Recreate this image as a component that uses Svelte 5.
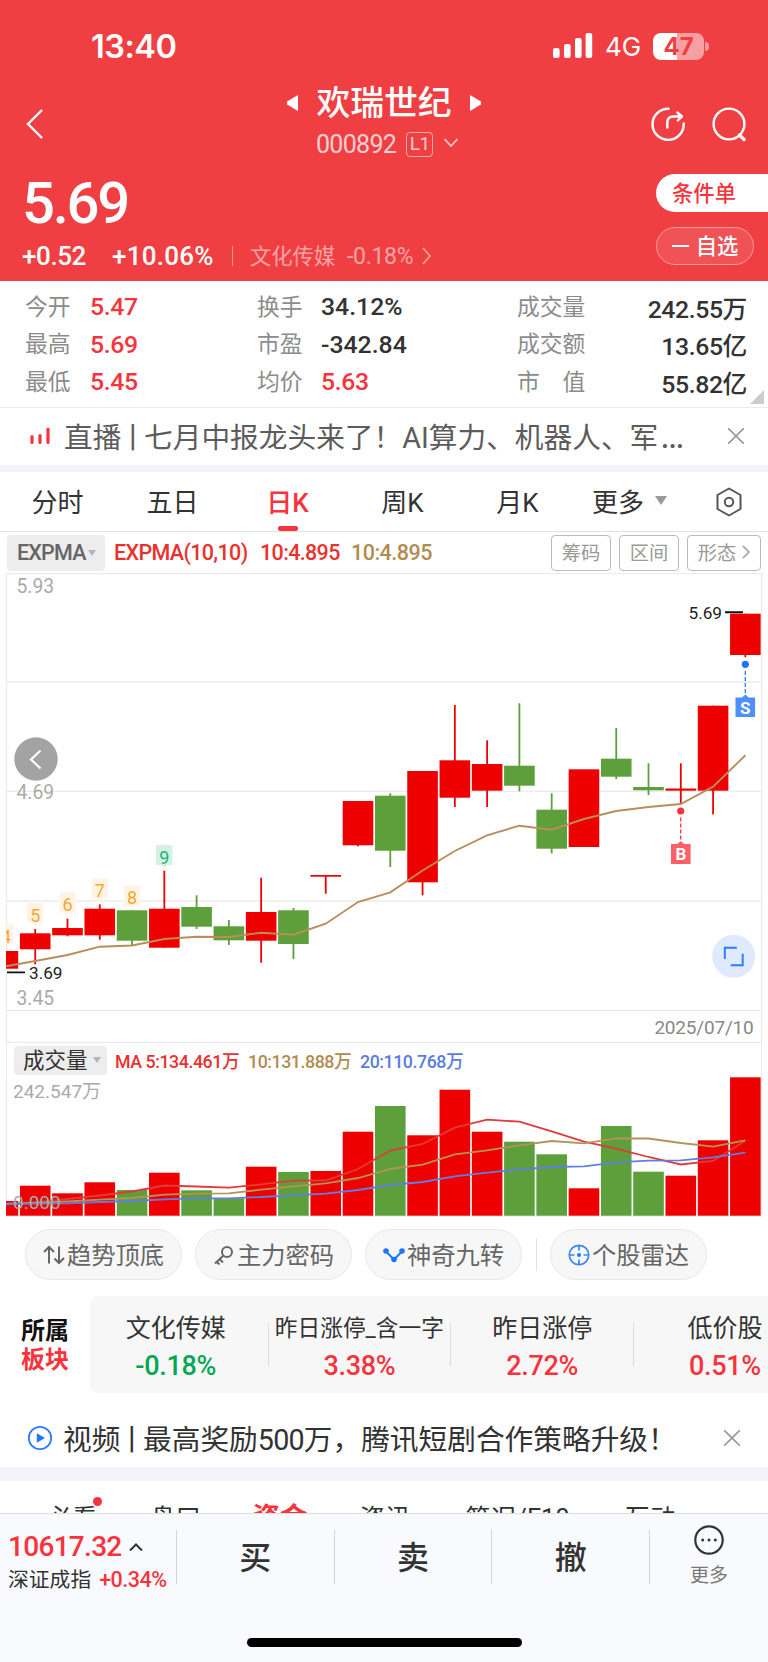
<script lang="ts">
	type Candle = {
		top: number
		bottom: number
		high: number
		low: number
		up: boolean
		vol: number
	}

	const STEP = 32.28
	const FIRST = 35.2
	const BODY = 30.6
	const VOL_BASE = 1215.7

	const c = (top: number, bottom: number, high: number, low: number, up: boolean, vol: number): Candle => ({
		top,
		bottom,
		high,
		low,
		up,
		vol,
	})

	const candles: Candle[] = [
		c(951, 968.7, 951, 968.7, true, 1201),
		c(933.3, 949.3, 929, 964.3, true, 1185.7),
		c(928, 935.3, 918.7, 936.3, true, 1193.3),
		c(908.7, 935.3, 904.3, 939.7, true, 1182.3),
		c(910.3, 940.7, 910.3, 945, false, 1190),
		c(908.7, 947.7, 870.7, 947.7, true, 1172.7),
		c(907, 926.7, 895.3, 929, false, 1190.3),
		c(926.3, 940.3, 920, 945, false, 1198.3),
		c(912, 940.7, 877.7, 962.7, true, 1166.7),
		c(910.3, 944, 908, 959, false, 1172),
		c(875, 876.7, 875, 893.7, true, 1171),
		c(801, 845.3, 801, 846.3, true, 1131.7),
		c(795.7, 850.7, 793.3, 867, false, 1106),
		c(771, 882.3, 771, 895.3, true, 1135.3),
		c(760.3, 797.7, 705, 807, true, 1089.7),
		c(764, 790.7, 740.3, 807, true, 1131.7),
		c(765.7, 785.7, 703.3, 791.3, false, 1141.7),
		c(809.7, 848.7, 793.3, 853.3, false, 1154.3),
		c(769.3, 847, 769.3, 847, true, 1188.3),
		c(758.7, 776.7, 728, 779, false, 1126),
		c(787, 790.3, 763.3, 795, false, 1171.7),
		c(788.5, 790.7, 763.3, 803.3, true, 1175.7),
		c(705.7, 790.7, 705.7, 814.3, true, 1140.3),
		c(613.7, 655, 613.7, 657.3, true, 1077.3),
	]

	const expma = [
		966.3, 961, 955, 946.7, 945.5, 939, 936.7, 937, 932.7, 934.7, 923.7, 902, 892.3, 870.5, 851, 835.3, 825.7,
		829.7, 819, 811, 807, 804, 786.7, 755.3,
	]
	const ma5 = [
		1203.5, 1202.5, 1199, 1195.5, 1191.5, 1185.5, 1186.5, 1187.7, 1184.3, 1180.7, 1180.5, 1169, 1150.5, 1144,
		1127.7, 1119.7, 1121.7, 1131.3, 1141.7, 1148.7, 1157, 1164.5, 1161, 1140.7,
	]
	const ma10 = [
		1204, 1202.7, 1201.5, 1199.7, 1198, 1194.7, 1193.7, 1193.3, 1189.7, 1186.3, 1183.3, 1178, 1169, 1164.7,
		1154.3, 1150.3, 1145.3, 1141, 1143.3, 1138.3, 1138.5, 1143, 1146.7, 1140.3,
	]
	const ma20 = [
		1204.3, 1203.7, 1203.3, 1202, 1201, 1199.3, 1198.3, 1198.3, 1197, 1195.3, 1193.7, 1190, 1185, 1182, 1176.3,
		1172.7, 1169.3, 1167, 1166.3, 1162.3, 1160.7, 1160.3, 1157.3, 1152.7,
	]

	const cx = (i: number) => FIRST + STEP * (i - 1)
	const left = (i: number) => Math.max(6, cx(i) - BODY / 2)
	const barWidth = (i: number) => cx(i) + BODY / 2 - left(i)
	const points = (ys: number[]) => ys.map((y, i) => `${Math.max(6, cx(i)).toFixed(1)},${y}`).join(' ')

	const counts = [
		{ n: '5', x: 35.2, y: 903 },
		{ n: '6', x: 67.5, y: 892.5 },
		{ n: '7', x: 99.8, y: 878.5 },
		{ n: '8', x: 132, y: 885.5 },
	]

	const stats = [
		['今开', '5.47', true, '换手', '34.12%', false, '成交量', '242.55万'],
		['最高', '5.69', true, '市盈', '-342.84', false, '成交额', '13.65亿'],
		['最低', '5.45', true, '均价', '5.63', true, '市　值', '55.82亿'],
	]

	const periods = ['分时', '五日', '日K', '周K', '月K']
	let period = $state('日K')

	const sectors = [
		{ name: '文化传媒', change: '-0.18%' },
		{ name: '昨日涨停_含一字', change: '3.38%', small: true },
		{ name: '昨日涨停', change: '2.72%' },
		{ name: '低价股', change: '0.51%' },
	]

	const sections = ['必看', '盘口', '资金', '资讯', '简况/F10', '互动']
	let section = $state('资金')
</script>

<div class="app">
	<header>
		<div class="status">
			<span class="time">13:40</span>
			<svg class="signal" width="40" height="26" viewBox="0 0 40 26" fill="#fff">
				<rect x="0" y="15" width="6.6" height="10" rx="2" />
				<rect x="11" y="11" width="6.6" height="14" rx="2" />
				<rect x="22" y="5" width="6.6" height="20" rx="2" />
				<rect x="32.6" y="0" width="6.6" height="25" rx="2" />
			</svg>
			<span class="net">4G</span>
			<span class="battery">47</span>
			<i class="cap"></i>
		</div>

		<div class="nav">
			<svg class="back" width="20" height="32" viewBox="0 0 20 32" fill="none" stroke="#fff" stroke-width="2.4">
				<path d="M17 2 3 16l14 14" />
			</svg>
			<div class="title">
				<div class="name">
					<svg width="12" height="16" viewBox="0 0 12 16" fill="#fff"><path d="M11 0v16L0 9.5q-1-1.5 0-3z" /></svg>
					<h1>欢瑞世纪</h1>
					<svg width="12" height="16" viewBox="0 0 12 16" fill="#fff"><path d="M1 0v16l11-6.5q1-1.5 0-3z" /></svg>
				</div>
				<div class="code">
					<span>000892</span>
					<b>L1</b>
					<svg width="16" height="10" viewBox="0 0 16 10" fill="none" stroke="#fbd0d0" stroke-width="1.7">
						<path d="m1.5 1 6.5 7 6.5-7" />
					</svg>
				</div>
			</div>
			<svg class="share" width="36" height="36" viewBox="0 0 36 36" fill="none" stroke="#fff" stroke-width="2.4" stroke-linecap="round" stroke-linejoin="round">
				<path d="M18.500 2.700A15.600 15.600 0 1 0 33.700 17.500" />
				<path d="M17.300 21.500V17q0-6.500 6-6.500h8M27.300 6.500l4.700 4-4.200 4" />
			</svg>
			<svg class="search" width="36" height="36" viewBox="0 0 36 36" fill="none" stroke="#fff" stroke-width="2.4" stroke-linecap="round">
				<circle cx="18" cy="18" r="15.4" />
				<path d="m28.500 29 4.500 4.500" stroke-width="3.2" />
			</svg>
		</div>

		<div class="quote">
			<div>
				<div class="price">5.69</div>
				<div class="change">
					<span class="diff">+0.52</span>
					<span class="pct">+10.06%</span>
					<i></i>
					<span class="board">文化传媒</span>
					<span class="board-pct">-0.18%</span>
					<svg width="10" height="18" viewBox="0 0 10 18" fill="none" stroke="#f9a5a6" stroke-width="1.6">
						<path d="m1 1 7 8-7 8" />
					</svg>
				</div>
			</div>
			<div class="pills">
				<button class="order">条件单</button>
				<button class="fav"><i></i><span>自选</span></button>
			</div>
		</div>
	</header>

	<section class="stats">
		{#each stats as [a, av, aUp, b, bv, bUp, d, dv]}
			<span class="label">{a}</span>
			<span class="value" class:up={aUp}>{av}</span>
			<span class="label">{b}</span>
			<span class="value" class:up={bUp}>{bv}</span>
			<span class="label">{d}</span>
			<span class="value end">{dv}</span>
		{/each}
		<i class="corner"></i>
	</section>

	<div class="notice live">
		<svg width="20" height="18" viewBox="0 0 20 18" stroke="#f9333c" stroke-width="3.2" stroke-linecap="round">
			<path d="M2 9.500v6M10 8.500v7M18 2v13.500" />
		</svg>
		<p>直播<s>丨</s>七月中报龙头来了！AI算力、机器人、军<span class="dots">…</span></p>
		<svg class="close" width="16" height="16" viewBox="0 0 16 16" stroke="#999" stroke-width="1.6"><path d="m0 0 16 16M16 0 0 16" /></svg>
	</div>

	<nav class="periods">
		{#each periods as p}
			<button class:active={period === p} onclick={() => (period = p)}>{p}</button>
		{/each}
		<button class="more">更多<i class="caret"></i></button>
		<svg class="gear" width="28" height="30" viewBox="0 0 28 30" fill="none" stroke="#555" stroke-width="2" stroke-linejoin="round">
			<path d="M14 1.500 25.500 8v14L14 28.500 2.500 22V8z" />
			<circle cx="14" cy="15" r="4.2" />
		</svg>
	</nav>

	<div class="indicator">
		<span class="pick">EXPMA<i class="caret"></i></span>
		<span class="red">EXPMA(10,10)</span>
		<span class="red r2">10:4.895</span>
		<span class="gold">10:4.895</span>
		<div class="tools">
			<button>筹码</button>
			<button>区间</button>
			<button class="shape">形态<svg width="8" height="14" viewBox="0 0 8 14" fill="none" stroke="#999" stroke-width="1.5"><path d="m1 1 6 6-6 6" /></svg></button>
		</div>
	</div>

	<svg class="chart" width="768" height="470" viewBox="0 573 768 470">
		<g class="grid">
			{#each [573.5, 682, 791.3, 901, 1010.3, 1042.3] as y}
				<line x1="6" x2="762" y1={y} y2={y} />
			{/each}
			<line x1="6.5" x2="6.5" y1="573" y2="1043" />
			<line x1="761.7" x2="761.7" y1="573" y2="1043" />
		</g>
		<g class="axis">
			<text x="16.5" y="593">5.93</text>
			<text x="16.5" y="799">4.69</text>
			<text x="16.5" y="1005">3.45</text>
		</g>

		<path d="M6 924.500h7.500v20H6z" fill="#fff3e6" />
		<svg x="6" y="920" width="10" height="28"><text class="count" x="0" y="23">4</text></svg>
		{#each counts as k}
			<path d="M{k.x - 8} {k.y}h16v20h-5l-3 2.500-3-2.500h-5z" fill="#fff3e6" />
			<text class="count" x={k.x} y={k.y + 18.6}>{k.n}</text>
		{/each}
		<path d="M156 845h16.500v20h-5l-3.200 2.700-3.200-2.700H156z" fill="#d5f1e4" />
		<text class="count nine" x="164.300" y="864">9</text>

		{#each candles as k, i}
			<g fill={k.up ? '#ee0000' : '#5d9f3a'}>
				<rect x={left(i)} y={k.top} width={barWidth(i)} height={k.bottom - k.top} />
				{#if k.low - k.high > k.bottom - k.top}
					<rect x={cx(i) - 0.9} y={k.high} width="1.8" height={k.low - k.high} />
				{/if}
			</g>
		{/each}
		<polyline points={points(expma)} fill="none" stroke="#b98d5c" stroke-width="1.9" />

		<path d="M7 972.400h18M725 612.200h18" stroke="#111" stroke-width="1.9" />
		<text class="mark" x="29" y="979">3.69</text>
		<text class="mark" x="688.500" y="619">5.69</text>

		<g class="trade" stroke="#2b7bff" fill="#4d8fff">
			<circle cx="745.3" cy="664.3" r="3.6" fill="#1e76ff" stroke="none" />
			<path d="M745.300 671v22" stroke-dasharray="4 2" />
			<path d="M735.500 697.500h6.500l3.300-3 3.300 3h6.500V717h-19.600z" stroke="none" />
			<text x="745.3" y="713.5">S</text>
		</g>
		<g class="trade" stroke="#f9333c" fill="#fb5f69">
			<circle cx="680.7" cy="811" r="3.6" fill="#f9333c" stroke="none" />
			<path d="M680.700 817.500v22" stroke-dasharray="4 2" />
			<path d="M671 844h6.500l3.300-3 3.300 3h6.500v20H671z" stroke="none" />
			<text x="680.9" y="860.2">B</text>
		</g>

		<circle cx="36" cy="759" r="21.7" fill="#a3a3a3" />
		<path d="m40.500 750.500-9.500 9 9.500 9" fill="none" stroke="#fff" stroke-width="2.2" />
		<circle cx="733.7" cy="956.3" r="21.5" fill="#dfe9ff" />
		<path d="M724.800 959v-11.300h12M730.700 965.300h12V953.700" fill="none" stroke="#2b7bff" stroke-width="1.9" />

		<text class="date" x="753.5" y="1034">2025/07/10</text>
	</svg>

	<div class="vol-head">
		<span class="pick"><span>成交量</span><i class="caret"></i></span>
		<span class="red">MA 5:134.461万</span>
		<span class="gold">10:131.888万</span>
		<span class="blue">20:110.768万</span>
	</div>
	<svg class="chart" width="768" height="140" viewBox="0 1077 768 140">
		<g class="grid">
			<line x1="6.5" x2="6.5" y1="1077" y2="1216" />
			<line x1="761.7" x2="761.7" y1="1077" y2="1216" />
			<line x1="6" x2="762" y1="1216" y2="1216" />
		</g>
		{#each candles as k, i}
			<rect x={left(i)} y={k.vol} width={barWidth(i)} height={VOL_BASE - k.vol} fill={k.up ? '#ee0000' : '#5d9f3a'} />
		{/each}
		<g fill="none" stroke-width="1.8">
			<polyline points={points(ma5)} stroke="#e23a38" />
			<polyline points={points(ma10)} stroke="#b3935a" />
			<polyline points={points(ma20)} stroke="#5f7fe0" />
		</g>
		<g class="axis vol">
			<text x="13" y="1098">242.547万</text>
			<text x="13" y="1209">0.000</text>
		</g>
	</svg>

	<div class="chips">
		<button>
			<svg width="22" height="20" viewBox="0 0 22 20" fill="none" stroke="#666" stroke-width="2"><path d="M6 18.500V2M1 7l5-5 5 5M16 1.500V18M11.500 13.500 16 18l5-5" /></svg><span>趋势顶底</span>
		</button>
		<button>
			<svg width="22" height="20" viewBox="0 0 22 20" fill="none" stroke="#666" stroke-width="2"><circle cx="14" cy="7" r="5" /><path d="M10.500 10.500 2 18.500M6.500 14l3.500 3.500M3.500 16.500l3 3" /></svg><span>主力密码</span>
		</button>
		<button>
			<svg width="22" height="20" viewBox="0 0 22 20" fill="#1e76ff"><path d="M3 6.500 11 14.500 19 6.500" fill="none" stroke="#1e76ff" stroke-width="2" /><circle cx="3" cy="6" r="2.8" /><circle cx="11" cy="14.5" r="2.8" /><circle cx="19" cy="6" r="2.8" /></svg><span>神奇九转</span>
		</button>
		<i></i>
		<button>
			<svg width="22" height="22" viewBox="0 0 22 22" fill="none" stroke="#3a86ff" stroke-width="1.7"><circle cx="11" cy="11" r="9.7" /><path d="M11 1v5.500M11 15.500V21M1 11h5.500M15.500 11H21" /><circle cx="11" cy="11" r="2" fill="#1e76ff" stroke="none" /></svg><span>个股雷达</span>
		</button>
	</div>

	<div class="belong">
		<div class="belong-title">所属<em>板块</em></div>
		<div class="sectors">
			{#each sectors as s}
				<div class="sector">
					<span class:small={s.small}>{s.name}</span>
					<b class:down={s.change.startsWith('-')}>{s.change}</b>
				</div>
			{/each}
		</div>
	</div>

	<div class="notice video">
		<svg width="26" height="26" viewBox="0 0 26 26"><circle cx="13" cy="13" r="11.2" fill="none" stroke="#2b7bff" stroke-width="1.8" /><path d="M9.800 8.200v9.600l8.200-4.800z" fill="#1e76ff" /></svg>
		<p>视频<s>丨</s>最高奖励<span class="num">500</span>万，腾讯短剧合作策略升级！</p>
		<svg class="close" width="16" height="16" viewBox="0 0 16 16" stroke="#999" stroke-width="1.6"><path d="m0 0 16 16M16 0 0 16" /></svg>
	</div>

	<nav class="sections">
		{#each sections as s, i}
			<button class:active={section === s} class:dot={i === 0} onclick={() => (section = s)}>{s}</button>
		{/each}
	</nav>

	<footer>
		<div class="actions">
			<div class="index">
				<div class="idx-value">10617.32<svg width="14" height="8" viewBox="0 0 14 8" fill="none" stroke="#333" stroke-width="2"><path d="m1 7.500 6-6 6 6" /></svg></div>
				<div class="idx-name">深证成指<span>+0.34%</span></div>
			</div>
			<button>买</button>
			<button>卖</button>
			<button>撤</button>
			<div class="more-btn">
				<svg width="32" height="32" viewBox="0 0 32 32" fill="#333"><circle cx="16" cy="16" r="13.7" fill="none" stroke="#333" stroke-width="2.2" /><circle cx="9.7" cy="16" r="1.5" /><circle cx="16" cy="16" r="1.5" /><circle cx="22.3" cy="16" r="1.5" /></svg>
				更多
			</div>
		</div>
		<div class="home"></div>
	</footer>
</div>

<style>
	:global(body) {
		background: #fff;
	}

	.app {
		--red: #f9333c;
		width: 768px;
		height: 1662px;
		overflow: hidden;
		background: #fff;
		color: #333;
		font-family: Roboto, 'Noto Sans CJK SC', sans-serif;
		white-space: nowrap;
	}
	button {
		padding: 0;
		border: none;
		background: none;
		color: inherit;
		font: inherit;
		cursor: pointer;
	}
	svg {
		display: block;
		flex: none;
	}
	.caret {
		border: 4px solid transparent;
		border-top: 6px solid #b5b5b5;
		border-bottom: 0;
	}
	.red { color: #e8322f; }
	.gold { color: #b08c4f; }
	.blue { color: #5a7ce0; }

	/* header */
	header {
		height: 281px;
		background: #f03f42;
		color: #fff;
	}
	.status {
		display: flex;
		align-items: center;
		height: 76px;
		padding: 8px 59px 0 91px;
	}
	.time {
		font: 600 32.5px Inter, sans-serif;
		letter-spacing: -0.5px;
	}
	.signal {
		margin-left: auto;
	}
	.net {
		margin-left: 12px;
		width: 48px;
		font: 400 26px Inter, sans-serif;
	}
	.battery {
		width: 51px;
		height: 27px;
		border-radius: 8px;
		background: linear-gradient(90deg, #fff 47%, #f8a0a1 47%);
		color: #f03f42;
		font: 700 24px/27px Inter, sans-serif;
		text-align: center;
	}
	.cap {
		width: 4px;
		height: 9px;
		margin-left: 1px;
		border-radius: 0 5px 5px 0;
		background: #f8a0a1;
	}
	.nav {
		display: flex;
		align-items: center;
		height: 80px;
		padding: 0 21px 0 25px;
	}
	.title {
		align-self: flex-start;
		margin: 2px 0 0 242px;
		width: 194px;
	}
	.name {
		display: flex;
		align-items: center;
		justify-content: space-between;
	}
	.name svg {
		margin-bottom: 2px;
	}
	h1 {
		margin: 0;
		font-size: 33.8px;
		font-weight: 500;
		line-height: 35px;
	}
	.code {
		display: flex;
		align-items: center;
		height: 26px;
		margin: 10px 0 0 29px;
		color: #fbd0d0;
		font-size: 25px;
		letter-spacing: -0.7px;
	}
	.code b {
		box-sizing: border-box;
		width: 27px;
		height: 25px;
		margin: 0 11px 0 10px;
		border: 1.5px solid #f8a9aa;
		border-radius: 4px;
		font-size: 19px;
		font-weight: 400;
		line-height: 22px;
		text-align: center;
	}
	.code svg {
		margin-left: -1px;
		margin-bottom: 2px;
	}
	.share {
		margin-left: auto;
	}
	.search {
		margin-left: 25px;
	}
	.quote {
		display: flex;
		justify-content: space-between;
	}
	.price {
		margin: 9px 0 0 22px;
		font-size: 58px;
		font-weight: 500;
		line-height: 60px;
		letter-spacing: -2.3px;
	}
	.change {
		display: flex;
		align-items: center;
		height: 30px;
		margin: 8px 0 0 22px;
	}
	.diff, .pct {
		font-size: 26px;
		font-weight: 500;
		letter-spacing: -0.4px;
	}
	.diff { width: 90px; }
	.pct {
		width: 120px;
		letter-spacing: 0.25px;
	}
	.change i {
		width: 1px;
		height: 20px;
		margin-right: 17px;
		background: #f68f90;
	}
	.board, .board-pct {
		color: #f9a5a6;
		font-size: 21.3px;
	}
	.board {
		width: 97px;
		padding-bottom: 3px;
	}
	.board-pct {
		width: 75px;
		font-size: 23px;
		letter-spacing: -0.3px;
	}
	.pills {
		display: flex;
		flex-direction: column;
		gap: 15px;
		width: 112px;
		padding-top: 10px;
		font-size: 21.3px;
		font-weight: 500;
	}
	.order {
		height: 38px;
		padding: 0 16px 3px 0;
		border-radius: 19px 0 0 19px;
		background: #fff;
		color: var(--red);
	}
	.fav {
		display: flex;
		align-items: center;
		justify-content: center;
		gap: 7px;
		box-sizing: border-box;
		width: 98px;
		height: 38px;
		border: 1px solid #f79b9c;
		border-radius: 19px;
		background: #f15255;
	}
	.fav span {
		padding-bottom: 4px;
	}
	.fav i {
		width: 17px;
		height: 2px;
		background: #fff;
	}

	/* stats */
	.stats {
		position: relative;
		display: grid;
		grid-template-columns: 65px 167px 64px 196px 80px 150px;
		grid-auto-rows: 37.6px;
		align-items: center;
		box-sizing: border-box;
		height: 127px;
		padding: 7px 21px 0 25px;
		border-bottom: 1px solid #ececec;
	}
	.label {
		padding-bottom: 3px;
		color: #8c8c8c;
		font-size: 22.8px;
	}
	.value {
		font-size: 24.8px;
		font-weight: 500;
	}
	.value.up {
		color: var(--red);
		letter-spacing: -0.4px;
	}
	.value.end {
		text-align: right;
		letter-spacing: -0.4px;
	}
	.corner {
		position: absolute;
		right: 4px;
		bottom: 3px;
		border: 7px solid #ccc;
		border-top-color: transparent;
		border-left-color: transparent;
	}

	/* notices */
	.notice {
		display: flex;
		align-items: center;
		box-sizing: border-box;
		font-size: 28.7px;
	}
	.notice p {
		flex: 1;
		margin: 0;
	}
	.notice s {
		margin: 0 -3px;
		text-decoration: none;
	}
	.dots {
		margin-left: 2px;
		font-size: 36px;
		line-height: 28px;
	}
	.num {
		letter-spacing: -0.8px;
	}
	.live {
		height: 64px;
		padding: 0 24px 2px 30px;
		border-bottom: 7px solid #f2f4f9;
		color: #5c5c5c;
	}
	.live p { padding-left: 14px; }
	.video {
		height: 88px;
		padding: 15px 28px 0 27px;
		border-bottom: 14px solid #f2f4f9;
	}
	.video p { padding-left: 10px; }

	/* period tabs */
	.periods {
		display: flex;
		align-items: center;
		box-sizing: border-box;
		height: 60px;
		border-bottom: 1px solid #e3e3e3;
		font-size: 26px;
	}
	.periods button {
		position: relative;
		width: 115px;
		height: 59px;
		padding-bottom: 2px;
	}
	.periods .active {
		color: var(--red);
		font-weight: 500;
	}
	.periods .active::after {
		content: '';
		position: absolute;
		left: 48px;
		bottom: 0;
		width: 20px;
		height: 5px;
		border-radius: 2px;
		background: var(--red);
	}
	.periods .more {
		display: flex;
		align-items: center;
		gap: 11px;
		width: 123px;
		padding-left: 17px;
	}
	.more .caret {
		border-width: 9px 6.5px 0;
		border-top-color: #999;
	}
	.gear {
		margin-left: 17px;
	}

	/* indicator row */
	.indicator {
		display: flex;
		align-items: center;
		height: 41px;
		padding: 0 7px;
		font-size: 21.5px;
		font-weight: 500;
		letter-spacing: -0.5px;
	}
	.pick {
		display: flex;
		align-items: center;
		gap: 2px;
		box-sizing: border-box;
		width: 98px;
		height: 36px;
		margin-right: 9px;
		padding-left: 10px;
		border-radius: 4px;
		background: #ededed;
		color: #666;
	}
	.indicator .red {
		width: 146px;
		letter-spacing: -0.65px;
	}
	.indicator .red.r2 { width: 91px; }
	.indicator .pick { letter-spacing: -0.8px; }
	.tools {
		display: flex;
		gap: 8px;
		margin-left: auto;
	}
	.tools button {
		box-sizing: border-box;
		width: 60px;
		height: 36px;
		padding-bottom: 2px;
		border: 1px solid #bbb;
		border-radius: 4px;
		color: #999;
		font-size: 19.3px;
		font-weight: 400;
	}
	.tools .shape {
		display: flex;
		align-items: center;
		justify-content: center;
		gap: 6px;
		width: 74px;
	}

	/* charts */
	.grid line {
		stroke: #ececec;
		stroke-width: 1.3;
	}
	.axis {
		fill: #aaa;
		font-size: 19.3px;
	}
	.axis.vol { font-size: 19px; }
	.mark {
		fill: #222;
		font-size: 17.2px;
	}
	.count {
		fill: #f9a72b;
		font-size: 18px;
		text-anchor: middle;
	}
	.nine { fill: #1bb573; }
	.trade text {
		fill: #fff;
		stroke: none;
		font-size: 17px;
		font-weight: 700;
		text-anchor: middle;
	}
	.trade path { stroke-width: 1.3; }
	.date {
		fill: #888;
		font-size: 19px;
		letter-spacing: -0.2px;
		text-anchor: end;
	}
	.vol-head {
		display: flex;
		align-items: center;
		height: 34px;
		margin: 0 6px;
		border-left: 1px solid #ececec;
		border-right: 1px solid #ececec;
		font-size: 17.8px;
		font-weight: 500;
		letter-spacing: -0.45px;
	}
	.vol-head .pick {
		gap: 5px;
		width: 93px;
		height: 29px;
		margin: 0 8px 0 7px;
		padding-left: 9px;
		color: #333;
		font-size: 21.5px;
		font-weight: 400;
		letter-spacing: 0;
	}
	.pick span { padding-bottom: 3px; }
	.vol-head .red { width: 133px; }
	.vol-head .gold { width: 112px; }

	/* shortcut chips */
	.chips {
		display: flex;
		align-items: center;
		gap: 13px;
		height: 51px;
		padding: 12px 25px 16px;
	}
	.chips button {
		display: flex;
		align-items: center;
		justify-content: center;
		gap: 2px;
		box-sizing: border-box;
		width: 157px;
		height: 51px;
		border: 1px solid #e8e8e8;
		border-radius: 26px;
		background: #f7f7f7;
		color: #666;
		font-size: 24.3px;
	}
	.chips span {
		padding-bottom: 2px;
	}
	.chips i {
		width: 1px;
		height: 33px;
		margin-left: 1px;
		background: #e2e2e2;
	}

	/* sectors */
	.belong {
		display: flex;
		height: 97px;
		overflow: hidden;
	}
	.belong-title {
		flex: none;
		width: 69px;
		padding: 21px 0 0 21px;
		color: #111;
		font-size: 24px;
		font-weight: 700;
		line-height: 28.5px;
	}
	em {
		display: block;
		color: var(--red);
		font-style: normal;
	}
	.sectors {
		display: flex;
		flex: none;
		align-items: center;
		height: 97px;
		padding-right: 60px;
		border-radius: 8px;
		background: #f7f7f7;
	}
	.sector {
		display: flex;
		flex-direction: column;
		align-items: center;
		justify-content: center;
		gap: 9px;
		box-sizing: border-box;
		width: 182.8px;
		height: 43px;
		padding-top: 5px;
		border-right: 1px solid #ddd;
	}
	.sector:first-child {
		width: 178.500px;
		padding-right: 6px;
	}
	.sector span {
		font-size: 25px;
		line-height: 29px;
	}
	.sector .small { font-size: 22.7px; }
	.sector b {
		color: var(--red);
		font-size: 27px;
		font-weight: 500;
		line-height: 29px;
		letter-spacing: -0.3px;
	}
	.sector .down { color: #00a854; }

	/* section tabs */
	.sections {
		display: grid;
		grid-template-columns: 104px 103px 106px 104px 161px 104px;
		height: 32px;
		padding-left: 20px;
		overflow: hidden;
		font-size: 25.5px;
	}
	.sections button {
		position: relative;
		height: 30px;
		margin-top: 22px;
		line-height: 30px;
	}
	.sections .active {
		color: var(--red);
		font-size: 27.5px;
		font-weight: 700;
	}
	.dot::after {
		content: '';
		position: absolute;
		left: 73px;
		top: -6px;
		width: 9px;
		height: 9px;
		border-radius: 50%;
		background: var(--red);
	}

	/* bottom bar */
	footer {
		box-sizing: border-box;
		height: 149px;
		border-top: 1px solid #dcdde0;
		background: #f9fafd;
	}
	.actions {
		display: flex;
		height: 54px;
		padding-top: 16px;
	}
	.index {
		width: 176px;
		box-sizing: border-box;
		padding-left: 8px;
	}
	.idx-value {
		display: flex;
		align-items: center;
		gap: 7px;
		color: var(--red);
		font-size: 28px;
		font-weight: 500;
		line-height: 33px;
		letter-spacing: -0.7px;
	}
	.idx-name {
		font-size: 20.8px;
		line-height: 33px;
	}
	.idx-name span {
		margin-left: 8px;
		color: var(--red);
		font-size: 21.5px;
		font-weight: 500;
		letter-spacing: -0.5px;
	}
	.actions button {
		box-sizing: border-box;
		width: 158px;
		padding-bottom: 4px;
		border-left: 1px solid #d5d6da;
		font-size: 32px;
		font-weight: 500;
	}
	.more-btn {
		display: flex;
		flex-direction: column;
		align-items: center;
		width: 118px;
		height: 54px;
		border-left: 1px solid #d5d6da;
		color: #777;
		font-size: 19px;
		line-height: 39px;
	}
	.more-btn svg {
		margin-top: -6px;
	}
	.home {
		width: 275px;
		height: 9px;
		margin: 54px auto 0;
		border-radius: 5px;
		background: #000;
	}
</style>
